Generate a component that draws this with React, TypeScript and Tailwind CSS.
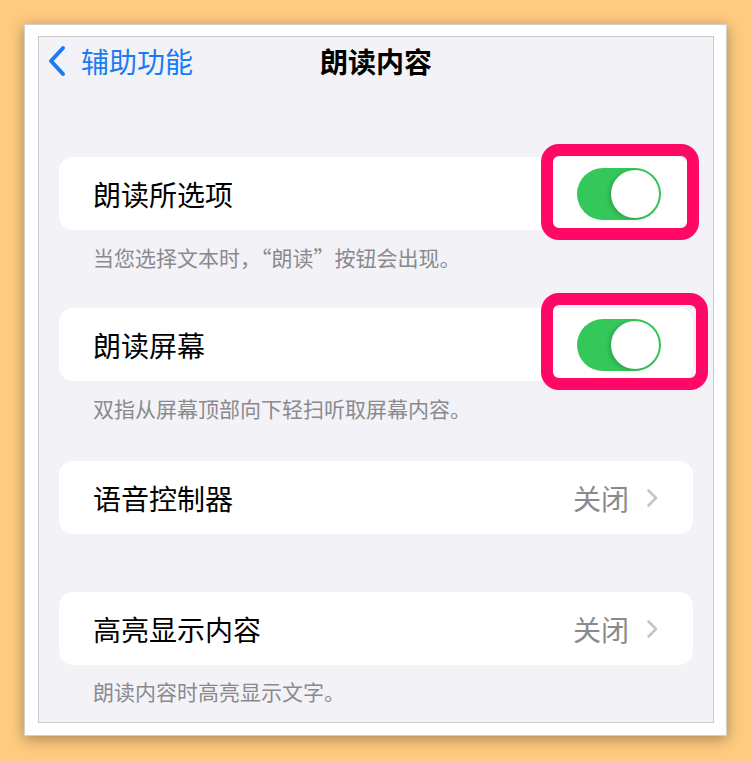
const font = { fontFamily: '"Noto Sans CJK SC", "Noto Sans", sans-serif' };

const Toggle = () => (
  <div className="w-[84px] h-[52px] rounded-full bg-[#34c759] relative">
    <div className="absolute right-[2px] top-[2px] w-[48px] h-[48px] rounded-full bg-white shadow-[-2px_1px_4px_rgba(0,0,0,0.18)]" />
  </div>
);

const Row = ({ label, right }: { label: string; right: React.ReactNode }) => (
  <div className="h-[73px] mx-[20px] bg-white rounded-[14px] flex items-center justify-between pl-[34px] pr-[32px]">
    <span className="text-[28px] text-black leading-none">{label}</span>
    {right}
  </div>
);

const Off = () => (
  <div className="flex items-center gap-[17px] text-[#8a8a8e]">
    <span className="text-[28px] leading-none">关闭</span>
    <svg width="13" height="20" viewBox="0 0 13 20" fill="none" className="mr-[2px]">
      <path d="M2.5 2.5 L10 10 L2.5 17.5" stroke="#c4c4c7" strokeWidth="2.6" strokeLinecap="round" strokeLinejoin="round" />
    </svg>
  </div>
);

const Note = ({ text, className }: { text: string; className: string }) => (
  <p className={`px-[54px] text-[21px] leading-[24px] text-[#8a8a8e] ${className}`}>{text}</p>
);

export default function App() {
  return (
    <div className="w-[752px] h-[761px] bg-[#ffcb80] relative overflow-hidden pt-[24px] pl-[24px]" style={font}>
      <div className="w-[703px] h-[712px] bg-white border border-[#cfcfcf] shadow-[0_3px_14px_rgba(0,0,0,0.35)] pt-[11px] pl-[13px]">
        <div className="w-[676px] h-[687px] bg-[#f2f2f7] border border-[#cccccc] flex flex-col">
          {/* nav bar */}
          <div className="h-[54px] pb-[6px] relative flex items-center">
            <div className="flex items-center pl-[8px] gap-[14px] text-[#1a7cf5]">
              <svg width="20" height="32" viewBox="0 0 20 32" fill="none">
                <path d="M16 3 L4 16 L16 29" stroke="currentColor" strokeWidth="4" strokeLinecap="round" strokeLinejoin="round" />
              </svg>
              <span className="text-[28px] leading-none">辅助功能</span>
            </div>
            <span className="absolute left-1/2 -translate-x-1/2 text-[28px] font-bold leading-none text-black">朗读内容</span>
          </div>

          <div className="mt-[66px]">
            <Row label="朗读所选项" right={<Toggle />} />
          </div>
          <Note className="pt-[15px]" text="当您选择文本时，“朗读”按钮会出现。" />

          <div className="mt-[39px]">
            <Row label="朗读屏幕" right={<Toggle />} />
          </div>
          <Note className="pt-[15px]" text="双指从屏幕顶部向下轻扫听取屏幕内容。" />

          <div className="mt-[41px]">
            <Row label="语音控制器" right={<Off />} />
          </div>

          <div className="mt-[58px]">
            <Row label="高亮显示内容" right={<Off />} />
          </div>
          <Note className="pt-[14px]" text="朗读内容时高亮显示文字。" />
        </div>
      </div>

      {/* highlight boxes */}
      <div className="absolute left-[541px] top-[144px] w-[158px] h-[96px] border-[12px] border-[#ff0866] rounded-[18px]" />
      <div className="absolute left-[541px] top-[293px] w-[167px] h-[97px] border-[12px] border-[#ff0866] rounded-[18px]" />
    </div>
  );
}
